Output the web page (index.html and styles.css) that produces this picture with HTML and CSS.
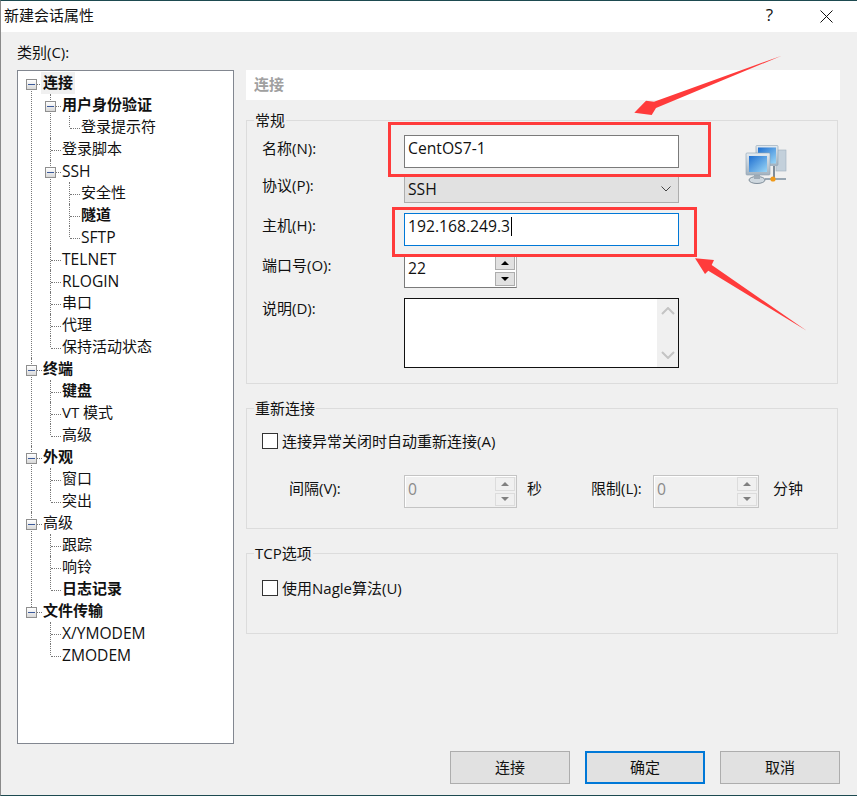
FILE: index.html
```html
<!DOCTYPE html>
<html lang="zh-CN">

<head>
    <meta charset="UTF-8">
    <title>新建会话属性</title>
    <link rel="stylesheet" href="styles.css">
</head>

<body>
    <div class="window">
        <div class="titlebar">
            <span class="title-text">新建会话属性</span>
            <span class="title-help">?</span>
            <svg class="title-close" width="13" height="13" viewBox="0 0 13 13">
                <path d="M0.5 0.5 L12.5 12.5 M12.5 0.5 L0.5 12.5" stroke="#111" fill="none" />
            </svg>
        </div>

        <div class="main">
            <div class="category-label">类别(C):</div>

            <div class="tree">
                <ul>
                    <li class="open">
                        <div class="node selected bold"><i class="box"></i><span>连接</span></div>
                        <ul>
                            <li class="open">
                                <div class="node bold"><i class="box"></i><span>用户身份验证</span></div>
                                <ul>
                                    <li><div class="node"><span>登录提示符</span></div></li>
                                </ul>
                            </li>
                            <li><div class="node"><span>登录脚本</span></div></li>
                            <li class="open">
                                <div class="node latin"><i class="box"></i><span>SSH</span></div>
                                <ul>
                                    <li><div class="node"><span>安全性</span></div></li>
                                    <li><div class="node bold"><span>隧道</span></div></li>
                                    <li><div class="node latin"><span>SFTP</span></div></li>
                                </ul>
                            </li>
                            <li><div class="node latin"><span>TELNET</span></div></li>
                            <li><div class="node latin"><span>RLOGIN</span></div></li>
                            <li><div class="node"><span>串口</span></div></li>
                            <li><div class="node"><span>代理</span></div></li>
                            <li><div class="node"><span>保持活动状态</span></div></li>
                        </ul>
                    </li>
                    <li class="open">
                        <div class="node bold"><i class="box"></i><span>终端</span></div>
                        <ul>
                            <li><div class="node bold"><span>键盘</span></div></li>
                            <li><div class="node"><span>VT 模式</span></div></li>
                            <li><div class="node"><span>高级</span></div></li>
                        </ul>
                    </li>
                    <li class="open">
                        <div class="node bold"><i class="box"></i><span>外观</span></div>
                        <ul>
                            <li><div class="node"><span>窗口</span></div></li>
                            <li><div class="node"><span>突出</span></div></li>
                        </ul>
                    </li>
                    <li class="open">
                        <div class="node"><i class="box"></i><span>高级</span></div>
                        <ul>
                            <li><div class="node"><span>跟踪</span></div></li>
                            <li><div class="node"><span>响铃</span></div></li>
                            <li><div class="node bold"><span>日志记录</span></div></li>
                        </ul>
                    </li>
                    <li class="open">
                        <div class="node bold"><i class="box"></i><span>文件传输</span></div>
                        <ul>
                            <li><div class="node latin"><span>X/YMODEM</span></div></li>
                            <li><div class="node latin"><span>ZMODEM</span></div></li>
                        </ul>
                    </li>
                </ul>
            </div>

            <div class="panel">
                <div class="panel-header">连接</div>

                <div class="group group-general">
                    <div class="group-title">常规</div>
                    <div class="form-grid">
                        <label class="form-label label-name">名称(N):</label>
                        <div class="field field-text">CentOS7-1</div>
                        <svg class="session-icon" width="42" height="40" viewBox="0 0 42 40">
                            <defs>
                                <linearGradient id="screen" x1="0" y1="0" x2="1" y2="1">
                                    <stop offset="0" stop-color="#1f6fd0" />
                                    <stop offset="1" stop-color="#9ad6f6" />
                                </linearGradient>
                                <linearGradient id="frame" x1="0" y1="0" x2="0" y2="1">
                                    <stop offset="0" stop-color="#e4ebf1" />
                                    <stop offset="1" stop-color="#a3b2bf" />
                                </linearGradient>
                            </defs>
                            <rect x="31" y="5" width="10" height="21" fill="#c3d0db" stroke="#9fb0be" stroke-width="0.6" />
                            <rect x="11" y="0.5" width="22" height="20" rx="1" fill="url(#frame)" stroke="#8ea2b4" stroke-width="0.6" />
                            <rect x="13" y="2.5" width="18" height="16" fill="url(#screen)" />
                            <path d="M29 21 V34" stroke="#7f8c98" stroke-width="2" />
                            <path d="M20 34 H41" stroke="#98a6b2" stroke-width="2" />
                            <ellipse cx="12" cy="35" rx="8" ry="3.5" fill="#cfd8df" stroke="#7f8d99" />
                            <rect x="9" y="29" width="6" height="5" fill="#9fabb6" />
                            <rect x="1" y="8" width="24" height="22" rx="1" fill="url(#frame)" stroke="#8ea2b4" stroke-width="0.6" />
                            <rect x="4" y="11" width="18" height="16" fill="url(#screen)" />
                            <circle cx="28" cy="34" r="2.6" fill="#f09a1a" />
                        </svg>

                        <label class="form-label label-protocol">协议(P):</label>
                        <div class="field-select">
                            <span>SSH</span>
                            <svg width="10" height="6" viewBox="0 0 10 6">
                                <path d="M0.5 0.5 L5 5 L9.5 0.5" stroke="#444" fill="none" />
                            </svg>
                        </div>

                        <label class="form-label label-host">主机(H):</label>
                        <div class="field field-text field-focus"><span class="caret">192.168.249.3</span></div>

                        <label class="form-label label-port">端口号(O):</label>
                        <div class="spin spin-port">
                            <div class="spin-value">22</div>
                            <div class="spin-btns">
                                <div class="spin-btn"><i class="tri-up"></i></div>
                                <div class="spin-btn"><i class="tri-down"></i></div>
                            </div>
                        </div>

                        <label class="form-label label-desc">说明(D):</label>
                        <div class="memo">
                            <div class="memo-scroll">
                                <svg width="14" height="8" viewBox="0 0 14 8">
                                    <path d="M1 7 L7 1 L13 7" stroke="#c4c4c4" stroke-width="2" fill="none" />
                                </svg>
                                <svg width="14" height="8" viewBox="0 0 14 8">
                                    <path d="M1 1 L7 7 L13 1" stroke="#c4c4c4" stroke-width="2" fill="none" />
                                </svg>
                            </div>
                        </div>
                    </div>
                </div>

                <div class="group group-reconnect">
                    <div class="group-title">重新连接</div>
                    <div class="check-row check-reconnect"><i class="checkbox"></i><span>连接异常关闭时自动重新连接(A)</span></div>
                    <div class="interval-row">
                        <span class="interval-label">间隔(V):</span>
                        <div class="spin spin-off spin-interval">
                            <div class="spin-value">0</div>
                            <div class="spin-btns">
                                <div class="spin-btn"><i class="tri-up"></i></div>
                                <div class="spin-btn"><i class="tri-down"></i></div>
                            </div>
                        </div>
                        <span class="unit-sec">秒</span>
                        <span class="limit-label">限制(L):</span>
                        <div class="spin spin-off spin-limit">
                            <div class="spin-value">0</div>
                            <div class="spin-btns">
                                <div class="spin-btn"><i class="tri-up"></i></div>
                                <div class="spin-btn"><i class="tri-down"></i></div>
                            </div>
                        </div>
                        <span class="unit-min">分钟</span>
                    </div>
                </div>

                <div class="group group-tcp">
                    <div class="group-title">TCP选项</div>
                    <div class="check-row check-nagle"><i class="checkbox"></i><span>使用Nagle算法(U)</span></div>
                </div>
            </div>
        </div>

        <div class="footer">
            <button type="button" class="btn">连接</button>
            <button type="button" class="btn btn-default">确定</button>
            <button type="button" class="btn">取消</button>
        </div>

        <!-- red annotations drawn over the dialog -->
        <svg class="marks" width="857" height="796" viewBox="0 0 857 796">
            <rect x="389.5" y="123.5" width="320" height="52" fill="none" stroke="#ff3b3b" stroke-width="3" />
            <rect x="393.5" y="208.5" width="302" height="47" fill="none" stroke="#ff3b3b" stroke-width="3" />
            <polygon points="634.3,112.7 646,100.7 654,101.7 781.7,55.7 656,108 651.7,115" fill="#ff3b3b" />
            <polygon points="695,258.3 714,260 711.7,265 806.7,330.7 708.3,270.7 705,274" fill="#ff3b3b" />
        </svg>
    </div>
</body>

</html>
```

FILE: styles.css
```css
* {
    box-sizing: border-box;
}

body {
    margin: 0;
    font-family: "Open Sans", "Noto Sans CJK SC", sans-serif;
    font-size: 15px;
    line-height: 20px;
    color: #111;
    background-color: #f0f0f0;
}

.window {
    position: relative;
    width: 857px;
    height: 796px;
    overflow: hidden;
    background-color: #f0f0f0;
    border-top: 1px solid #1d4a50;
    border-bottom: 1px solid #1d4a50;
    border-left: 1px solid #8a8a8a;
}

.titlebar {
    display: flex;
    align-items: center;
    height: 31px;
    padding: 0 0 0 3px;
    background: #fff;
}

.title-text {
    flex: 1;
    margin-top: -3px;
}

.title-help {
    margin: -3px 47px 0 0;
    font-size: 17px;
}

.title-close {
    margin-right: 24px;
}

.main {
    display: grid;
    grid-template-columns: 217px 594px;
    grid-template-rows: 27px 674px;
    column-gap: 12px;
    padding: 11px 0 0 16px;
}

.category-label {
    grid-column: 1 / 3;
    margin-top: -1px;
}

/* tree */
.tree {
    padding-top: 1px;
    background: #fff;
    border: 1px solid #828790;
}

.tree ul {
    margin: 0;
    padding: 0 0 0 19px;
    list-style: none;
}

.tree > ul {
    padding-left: 0;
}

.tree li {
    position: relative;
}

.tree li::before {
    content: "";
    position: absolute;
    left: 13px;
    top: 0;
    bottom: 0;
    border-left: 1px dotted #777;
}

.tree li:last-child::before {
    bottom: auto;
    height: 11px;
}

.tree > ul > li:first-child::before {
    top: 11px;
}

.node {
    position: relative;
    height: 22px;
    padding-left: 25px;
    line-height: 21px;
    white-space: nowrap;
}

.node::before {
    content: "";
    position: absolute;
    left: 14px;
    top: 12px;
    width: 10px;
    border-top: 1px dotted #777;
}

.node span {
    position: relative;
    display: inline-block;
}

.node.latin {
    font-size: 15.6px;
    line-height: 22px;
}

.node.bold span {
    font-weight: 700;
}

.node.selected span {
    height: 22px;
    margin-left: -2px;
    padding: 0 2px;
    background: #f0f0f0;
}

.box {
    position: absolute;
    z-index: 1;
    left: 8px;
    top: 7px;
    width: 11px;
    height: 11px;
    background: linear-gradient(#fff, #d8d8d8);
    border: 1px solid #8f8f8f;
}

.box::after {
    content: "";
    position: absolute;
    left: 1px;
    right: 1px;
    top: 4px;
    border-top: 1px solid #3b5a9a;
}

/* right panel */
.panel-header {
    height: 30px;
    padding-left: 8px;
    line-height: 28px;
    font-weight: 700;
    color: #a0a0a0;
    background: #fff;
}

.group {
    width: 592px;
    padding-left: 15px;
    border: 1px solid #dcdcdc;
}

.group-general {
    height: 264px;
    margin-top: 20px;
}

.group-reconnect {
    height: 121px;
    margin-top: 24px;
}

.group-tcp {
    height: 81px;
    margin-top: 24px;
}

.group-title {
    width: fit-content;
    height: 20px;
    margin: -11px 0 0 -8px;
    padding: 0 1px;
    background: #f0f0f0;
}

.form-grid {
    display: grid;
    grid-template-columns: 142px 275px auto;
    grid-template-rows: 40px 38px 41px 44px 70px;
    align-items: start;
    margin-top: 5px;
}

.form-label {
    grid-column: 1;
}

.label-name {
    margin-top: 3px;
}

.label-protocol {
    margin-top: 0;
}

.label-host {
    margin-top: 2px;
}

.label-port {
    margin-top: 1px;
}

.label-desc {
    margin-top: 0;
}

.field,
.field-select,
.spin-port,
.memo {
    grid-column: 2;
}

.field-text {
    height: 33px;
    padding-left: 3px;
    font-size: 15.7px;
    line-height: 25px;
    background: #fff;
    border: 1px solid #7a7a7a;
}

.field-focus {
    border-color: #0078d7;
}

.caret {
    display: inline-block;
    padding-right: 1px;
    border-right: 1px solid #000;
    line-height: 19px;
    margin-top: 3px;
}

.session-icon {
    grid-column: 3;
    grid-row: 1 / 3;
    margin: 10px 0 0 66px;
}

.field-select {
    display: flex;
    align-items: center;
    justify-content: space-between;
    height: 28px;
    padding: 0 7px 0 3px;
    font-size: 15.7px;
    background: #e1e1e1;
    border: 1px solid #adadad;
}

.memo {
    display: flex;
    justify-content: flex-end;
    height: 70px;
    background: #fff;
    border: 1px solid #111;
}

.memo-scroll {
    display: flex;
    flex-direction: column;
    align-items: center;
    justify-content: space-between;
    width: 21px;
    padding: 8px 0;
    background: #f0f0f0;
}

/* spin boxes */
.spin {
    display: flex;
    height: 34px;
    background: #fff;
    border: 1px solid #7a7a7a;
    border-right-color: #b4b4b4;
    border-bottom-color: #7a7a7a;
}

.spin-port {
    width: 113px;
}

.spin-value {
    flex: 1;
    padding-left: 3px;
    font-size: 15.7px;
    line-height: 26px;
}

.spin-btns {
    display: flex;
    flex-direction: column;
    gap: 2px;
    width: 20px;
    margin-right: 1px;
    padding: 1px 0;
}

.spin-btn {
    display: flex;
    align-items: center;
    justify-content: center;
    flex: 1;
    background: #e1e1e1;
    border: 1px solid #adadad;
}

.tri-up,
.tri-down {
    width: 0;
    height: 0;
    border-left: 4px solid transparent;
    border-right: 4px solid transparent;
}

.tri-up {
    border-bottom: 4px solid #000;
}

.tri-down {
    border-top: 4px solid #000;
}

.spin-off {
    height: 33px;
    background: #f0f0f0;
    border-color: #c4c4c4;
    box-shadow: inset 1px 1px 0 #fff;
    color: #8a8a8a;
}

.spin-off .spin-btn {
    background: #f0f0f0;
    border-color: #dcdcdc;
}

.spin-off .tri-up {
    border-bottom-color: #808080;
}

.spin-off .tri-down {
    border-top-color: #808080;
}

.spin-interval {
    width: 113px;
}

.spin-limit {
    width: 106px;
}

/* checkboxes and the interval row */
.check-row {
    display: flex;
    align-items: center;
    height: 16px;
}

.check-row span {
    margin-top: -1px;
}

.check-reconnect {
    margin-top: 15px;
}

.check-nagle {
    margin-top: 17px;
}

.checkbox {
    width: 16px;
    height: 16px;
    margin-right: 4px;
    background: #fff;
    border: 1px solid #333;
}

.interval-row {
    display: flex;
    margin-top: 26px;
    padding-left: 27px;
}

.interval-row span {
    line-height: 26px;
}

.interval-label {
    width: 115px;
}

.unit-sec {
    width: 15px;
    margin-left: 10px;
}

.limit-label {
    width: 62px;
    margin-left: 49px;
}

.unit-min {
    margin-left: 14px;
}

/* bottom buttons */
.footer {
    display: flex;
    justify-content: flex-end;
    gap: 15px;
    margin-top: 7px;
    padding-right: 17px;
}

.btn {
    width: 120px;
    height: 33px;
    padding: 0 0 2px;
    font: inherit;
    color: #111;
    background: #e1e1e1;
    border: 1px solid #adadad;
}

.btn-default {
    border: 2px solid #0078d7;
}

.marks {
    position: absolute;
    left: -1px;
    top: -1px;
}
```
